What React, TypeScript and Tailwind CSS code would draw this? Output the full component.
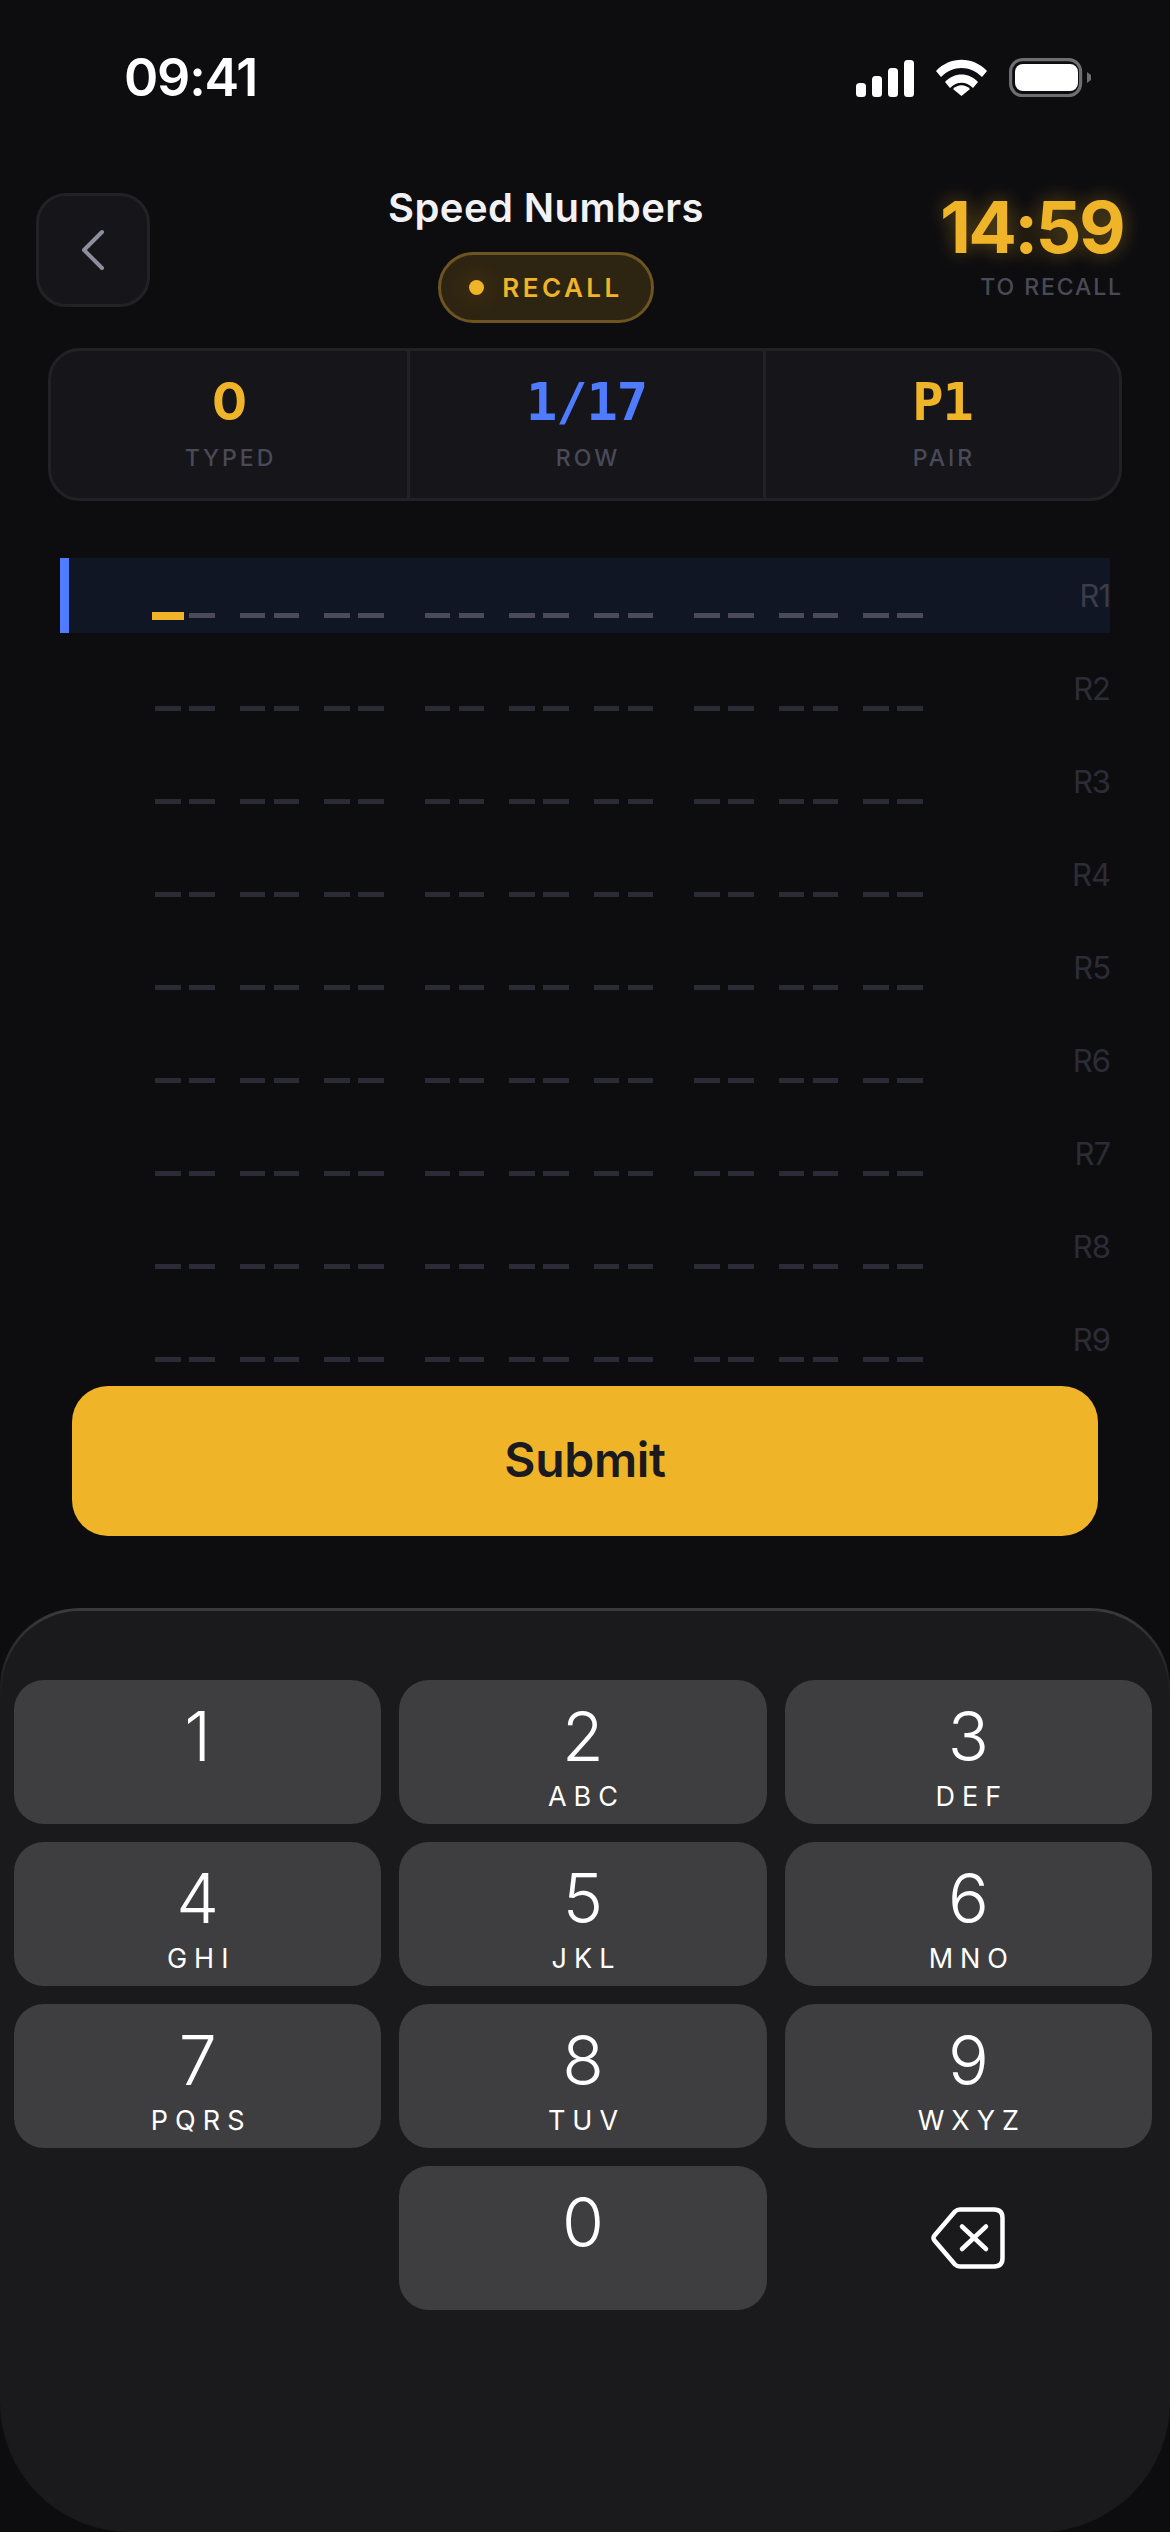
import React from "react";

const groups = [0, 1, 2];
const pairs = [0, 1, 2];

function Dashes({ active }: { active: boolean }) {
  return (
    <div className="flex gap-[41px]">
      {groups.map((g) => (
        <div key={g} className="flex gap-[25px]">
          {pairs.map((p) => (
            <div key={p} className="flex gap-[8.5px] items-start">
              {[0, 1].map((d) => {
                const first = active && g === 0 && p === 0 && d === 0;
                return first ? (
                  <div key={d} className="w-[32px] h-[8px] -mx-[3.25px] -mt-[0.5px] bg-[#f0b429]" />
                ) : (
                  <div key={d} className={`w-[25.5px] h-[5px] ${active ? "bg-[#4a4a58]" : "bg-[#2b2b35]"}`} />
                );
              })}
            </div>
          ))}
        </div>
      ))}
    </div>
  );
}

function Row({ n }: { n: number }) {
  const active = n === 1;
  return (
    <div
      className={`flex shrink-0 items-start h-[75px] mb-[18px] ${
        active ? "bg-[#111624] border-l-[9px] border-[#4f7cff] pl-[86px]" : "pl-[95px]"
      }`}
    >
      <div className="pt-[54.5px]">
        <Dashes active={active} />
      </div>
      <div
        className={`ml-auto mt-[19px] text-[31px] leading-[38px] tracking-[-1px] font-['Inter',sans-serif] ${
          active ? "text-[#3c3c48]" : "text-[#2c2c36]"
        }`}
      >
        R{n}
      </div>
    </div>
  );
}

function Stat({ value, label, color, divider, sans }: { value: string; label: string; color: string; divider?: boolean; sans?: boolean }) {
  return (
    <div className={`flex flex-col items-center ${divider ? "border-l-[3px] border-[#222226]" : ""}`}>
      <div
        className={`mt-[19px] text-[52px] leading-[64px] font-bold tracking-[-1px] ${
          sans ? "font-['Inter',sans-serif]" : "font-['DejaVu_Sans_Mono',monospace]"
        } ${color}`}
      >
        {value}
      </div>
      <div className="mt-[9px] text-[23px] leading-[30px] font-medium tracking-[3px] pl-[3px] text-[#4a4a56] font-['Inter',sans-serif]">
        {label}
      </div>
    </div>
  );
}

const keys = [
  ["1", ""],
  ["2", "ABC"],
  ["3", "DEF"],
  ["4", "GHI"],
  ["5", "JKL"],
  ["6", "MNO"],
  ["7", "PQRS"],
  ["8", "TUV"],
  ["9", "WXYZ"],
];

function Key({ d, l }: { d: string; l: string }) {
  return (
    <div className="h-[144px] rounded-[30px] bg-[#3e3e40] flex flex-col items-center text-white font-['Inter',sans-serif]">
      <div className="mt-[16px] text-[68px] leading-[80px] font-light">{d}</div>
      <div className="mt-[4px] text-[27px] leading-[33px] font-normal tracking-[7px] pl-[7px]">{l}</div>
    </div>
  );
}

export default function App() {
  return (
    <div className="w-[1170px] h-[2532px] overflow-hidden bg-[#0d0d10] flex flex-col font-['Inter',sans-serif]">
      {/* status bar */}
      <div className="h-[193px] shrink-0 flex items-start justify-between pl-[124px] pr-[79px] pt-[48px]">
        <div className="text-[52px] leading-[60px] font-semibold text-white tracking-[-1.2px]">09:41</div>
        <div className="flex items-start gap-[22px] pt-[10px]">
          <svg width="58" height="39" viewBox="0 0 58 39" fill="#fff" className="mt-[1px]">
            <rect x="0" y="24" width="10" height="14" rx="3.5" />
            <rect x="16" y="17" width="10" height="21" rx="3.5" />
            <rect x="32" y="9" width="10" height="29" rx="3.5" />
            <rect x="48" y="1" width="10" height="37" rx="3.5" />
          </svg>
          <svg width="51" height="38" viewBox="0 0 51 38" fill="#fff" className="mt-[1px]">
            <path d="M0 12 C14 -3 37 -3 51 12 L46 18 C34 6 17 6 5 18 Z" />
            <path d="M9 23 C18 13 33 13 42 23 L37 29 C30 22 21 22 14 29 Z" />
            <path d="M25.5 37 L17 30 C22 25 29 25 34 30 Z" />
          </svg>
          <svg width="82" height="39" viewBox="0 0 82 39" fill="none">
            <rect x="1.6" y="1.6" width="70" height="36" rx="12" stroke="#6e6e70" strokeWidth="3.2" />
            <rect x="6" y="6" width="63" height="27" rx="8" fill="#fff" />
            <path d="M78 14 L82 17 V22 L78 25 Z" fill="#6e6e70" />
          </svg>
        </div>
      </div>

      {/* header */}
      <div className="h-[155px] shrink-0 pl-[36px] pr-[50px] grid grid-cols-[114px_1fr_178px] items-start">
        <div className="w-[114px] h-[114px] rounded-[30px] bg-[#15151a] border-[3px] border-[#222226] flex items-center justify-center">
          <svg width="24" height="42" viewBox="0 0 24 42" fill="none" stroke="#8e8e9c" strokeWidth="4" strokeLinecap="round" strokeLinejoin="round">
            <path d="M21 3 L3 21 L21 39" />
          </svg>
        </div>
        <div className="flex flex-col items-center">
          <div className="mt-[-10px] text-[40px] leading-[50px] font-semibold tracking-[0.4px] text-[#f2f2f5]">Speed Numbers</div>
          <div className="mt-[19px] w-[216px] h-[71px] rounded-full border-[3px] border-[#6d5420] bg-[#2e2412] flex items-center justify-center gap-[18px]">
            <div className="w-[15px] h-[15px] rounded-full bg-[#f0b429] shadow-[0_0_24px_rgba(240,180,41,0.3)]" />
            <div className="text-[26px] leading-[30px] font-semibold tracking-[3.5px] text-[#f0b429]">RECALL</div>
          </div>
        </div>
        <div className="flex flex-col items-end -mr-[3px]">
          <div className="mt-[-8px] text-[72px] leading-[84px] font-bold tracking-[-2.7px] text-[#f0b429] [text-shadow:0_0_20px_rgba(240,180,41,0.4)]">14:59</div>
          <div className="mt-[3px] text-[23px] leading-[30px] font-medium tracking-[1.9px] text-[#4a4a56]">TO RECALL</div>
        </div>
      </div>

      {/* stats */}
      <div className="ml-[48px] w-[1074px] h-[153px] shrink-0 rounded-[32px] border-[3px] border-[#222226] bg-[#15151a] grid grid-cols-3">
        <Stat value="0" label="TYPED" color="text-[#f0b429]" sans />
        <Stat value="1/17" label="ROW" color="text-[#4f7cff]" divider />
        <Stat value="P1" label="PAIR" color="text-[#f0b429]" divider />
      </div>

      {/* rows */}
      <div className="mt-[57px] ml-[60px] w-[1050px] h-[828px] shrink-0 overflow-hidden flex flex-col">
        {[1, 2, 3, 4, 5, 6, 7, 8, 9].map((n) => (
          <Row key={n} n={n} />
        ))}
      </div>

      {/* submit */}
      <div className="ml-[72px] w-[1026px] h-[150px] shrink-0 rounded-[36px] bg-[#f0b429] flex items-center justify-center text-[48px] leading-[58px] pb-[2px] font-semibold tracking-[-0.3px] text-[#1a1a1f]">
        Submit
      </div>

      {/* keypad */}
      <div className="mt-[72px] flex-1 rounded-t-[80px] rounded-b-[130px] bg-[linear-gradient(#3a3a3c,#1a1a1c_90px)] pt-[3px] px-[2px]">
        <div className="h-full rounded-t-[78px] rounded-b-[128px] bg-[#1a1a1c] pt-[69px] pl-[12px] pr-[16px]">
          <div className="grid grid-cols-3 gap-[18px]">
            {keys.map(([d, l]) => (
              <Key key={d} d={d} l={l} />
            ))}
            <div />
            <Key d="0" l="" />
            <div className="flex items-center justify-center">
              <svg width="74" height="62" viewBox="0 0 74 62" fill="none" stroke="#fff" strokeWidth="4.5" strokeLinecap="round" strokeLinejoin="round">
                <path d="M29 2.5 H63 Q71.5 2.5 71.5 11 V51 Q71.5 59.5 63 59.5 H29 Q26 59.5 24 57.5 L3.5 33.5 Q1.5 31 3.5 28.5 L24 4.5 Q26 2.5 29 2.5 Z" />
                <path d="M31 19.5 L55 42 M55 19.5 L31 42" />
              </svg>
            </div>
          </div>
        </div>
      </div>
    </div>
  );
}
